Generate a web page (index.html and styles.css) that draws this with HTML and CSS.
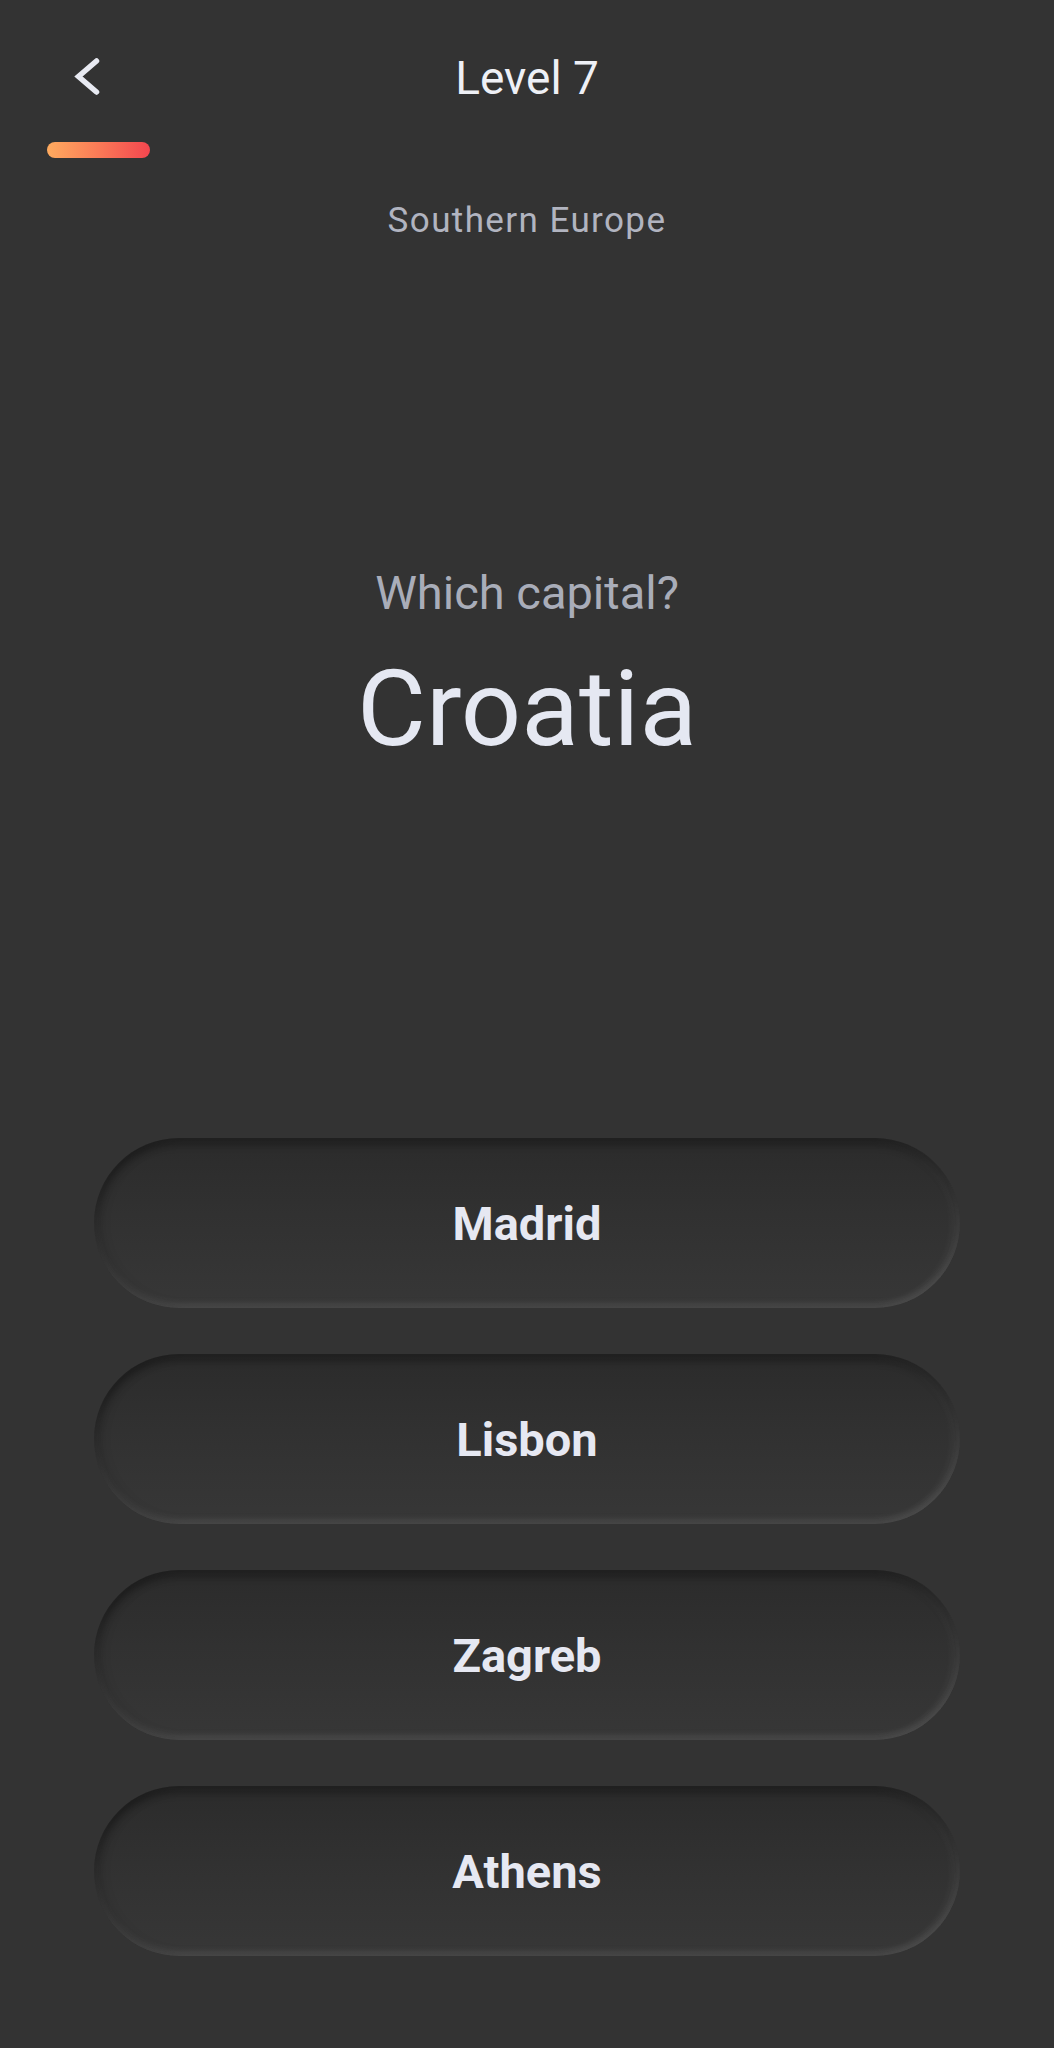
FILE: index.html
```html
<!DOCTYPE html>
<html lang="en">
<head>
<meta charset="utf-8">
<title>Level 7</title>
<link rel="stylesheet" href="styles.css">
</head>
<body>
<div class="screen">
  <header class="top">
    <div class="top-row">
      <button class="back" aria-label="Back">
        <svg width="30" height="44" viewBox="0 0 30 44" aria-hidden="true">
          <path d="M26.5 6 L8.5 21.5 L26.5 37" fill="none" stroke="#e8eaf2" stroke-width="5.5" stroke-linecap="round" stroke-linejoin="miter"/>
        </svg>
      </button>
      <h1 class="level">Level 7</h1>
      <span class="spacer"></span>
    </div>
    <div class="progress"></div>
  </header>

  <p class="region">Southern Europe</p>

  <section class="question">
    <p class="prompt">Which capital?</p>
    <h2 class="country">Croatia</h2>
  </section>

  <div class="answers">
    <button class="answer">Madrid</button>
    <button class="answer">Lisbon</button>
    <button class="answer">Zagreb</button>
    <button class="answer">Athens</button>
  </div>
</div>
</body>
</html>
```

FILE: styles.css
```css
* { box-sizing: border-box; }

html, body {
  margin: 0;
  padding: 0;
  background: #333333;
}

body {
  font-family: Roboto, "Noto Sans", "Liberation Sans", sans-serif;
  color: #e6e8f2;
}

.screen {
  width: 1054px;
  min-height: 2048px;
  background: #333333;
}

.top-row {
  display: grid;
  grid-template-columns: 1fr auto 1fr;
  padding-top: 50px;
}

.back {
  justify-self: start;
  align-self: start;
  margin: 5px 0 0 70px;
  padding: 0;
  border: 0;
  background: none;
  width: 30px;
  height: 44px;
  display: block;
}

.back svg { display: block; }

.level {
  margin: 0;
  font-size: 46px;
  line-height: 56px;
  font-weight: 400;
  color: #eef0f6;
}

.progress {
  margin: 36px 0 0 47px;
  width: 103px;
  height: 16px;
  border-radius: 8px;
  background: linear-gradient(90deg, #ffab5f 0%, #fb7a57 50%, #f4464f 100%);
}

.region {
  margin: 42px 0 0;
  text-align: center;
  font-size: 35px;
  line-height: 42px;
  letter-spacing: 1.4px;
  color: #b1b4c0;
}

.question {
  margin-top: 323px;
  text-align: center;
}

.prompt {
  margin: 0;
  font-size: 47px;
  line-height: 56px;
  color: #a9adb9;
}

.country {
  margin: 28px 0 0;
  font-size: 106px;
  line-height: 120px;
  font-weight: 400;
  color: #e5e8f2;
}

.answers {
  margin-top: 369px;
  padding: 0 94px;
  display: flex;
  flex-direction: column;
  gap: 46px;
}

.answer {
  height: 170px;
  padding: 1px 0 0;
  border: 0;
  border-radius: 85px;
  font-family: Roboto, "Noto Sans", "Liberation Sans", sans-serif;
  font-size: 47px;
  font-weight: 700;
  color: #e6e8f2;
  background: linear-gradient(180deg, #2b2b2b 0%, #313131 45%, #373737 100%);
  box-shadow:
    inset 0 6px 9px rgba(0, 0, 0, 0.32),
    inset 6px 0 12px rgba(0, 0, 0, 0.14),
    inset 0 -5px 7px rgba(255, 255, 255, 0.09),
    inset -6px 0 10px rgba(255, 255, 255, 0.07);
}
```
